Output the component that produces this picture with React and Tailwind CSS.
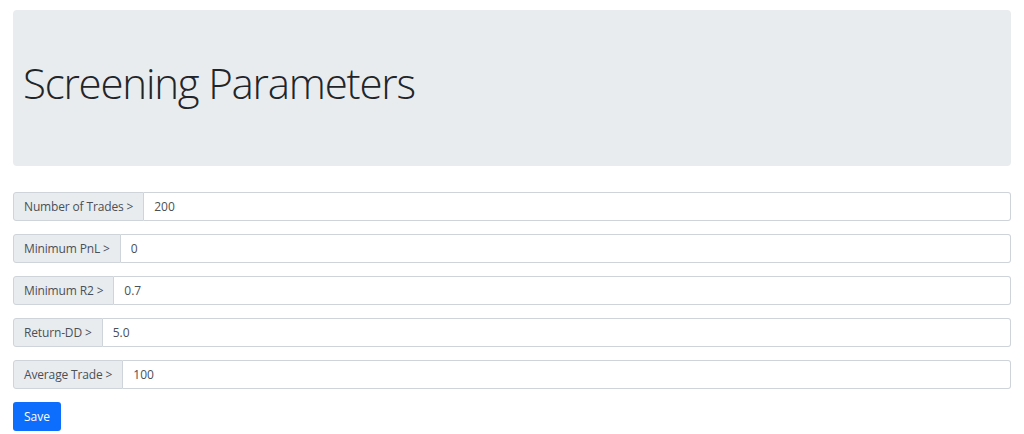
const fields = [
  { label: 'Number of Trades >', value: '200' },
  { label: 'Minimum PnL >', value: '0' },
  { label: 'Minimum R2 >', value: '0.7' },
  { label: 'Return-DD >', value: '5.0' },
  { label: 'Average Trade >', value: '100' },
];

export default function App() {
  return (
    <div className="min-h-screen bg-white px-[13px] pt-[10px] font-['Open_Sans',sans-serif] text-[#495057]">
      <div className="flex h-[156px] items-center rounded-sm bg-[#e9ecef] px-[10px] pb-[10px]">
        <h1 className="text-[42px] font-light leading-none tracking-[-1.2px] text-[#212529]">Screening Parameters</h1>
      </div>
      <div className="mt-[26px] flex flex-col gap-[13px]">
        {fields.map((f) => (
          <div key={f.label} className="flex h-[29px] text-[12px]">
            <span className="flex items-center whitespace-nowrap rounded-l-[3px] border border-[#ced4da] bg-[#e9ecef] px-[10px] tracking-[-0.15px]">
              {f.label}
            </span>
            <input
              defaultValue={f.value}
              className="min-w-0 flex-1 rounded-r-[3px] border border-l-0 border-[#ced4da] bg-white px-[10px] text-[12px] text-[#495057] outline-none"
            />
          </div>
        ))}
      </div>
      <button className="mt-[13px] h-[29px] rounded-[3px] bg-[#0d6efd] px-[11px] text-[12px] text-white">Save</button>
    </div>
  );
}
